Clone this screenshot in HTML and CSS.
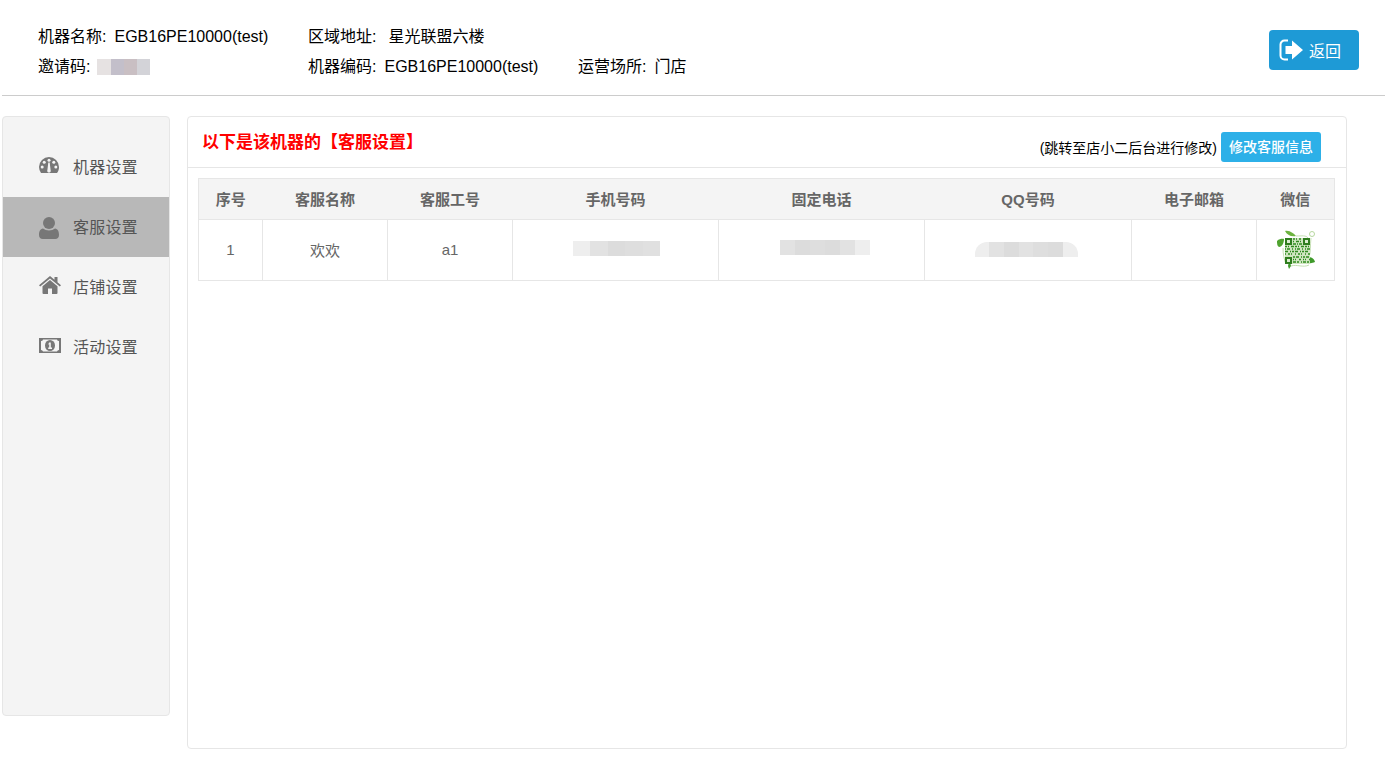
FILE: index.html
```html
<!DOCTYPE html>
<html lang="zh-CN">
<head>
<meta charset="utf-8">
<title>客服设置</title>
<link rel="stylesheet" href="styles.css">
</head>
<body>
<header class="top">
  <div class="info">
    <div class="info-row">
      <div class="field col-a"><span>机器名称:</span><span class="val">EGB16PE10000(test)</span></div>
      <div class="field col-b"><span>区域地址:</span><span class="val val-wide">星光联盟六楼</span></div>
    </div>
    <div class="info-row">
      <div class="field col-a"><span>邀请码:</span>
        <span class="mosaic invite"><i class="m1"></i><i class="m2"></i><i class="m3"></i><i class="m4"></i></span>
      </div>
      <div class="field col-b"><span>机器编码:</span><span class="val">EGB16PE10000(test)</span></div>
      <div class="field"><span>运营场所:</span><span class="val">门店</span></div>
    </div>
  </div>
  <a class="back">
    <svg class="back-icon" viewBox="0 0 24 24" width="24" height="24"><path d="M9 2.5H5.5A4 4 0 0 0 1.5 6.500v11a4 4 0 0 0 4 4H9" fill="none" stroke="#fff" stroke-width="2"/><path d="M13 2.500 24 12 13 21.500V16H6.500V8H13z" fill="#fff"/></svg>
    <span>返回</span>
  </a>
</header>
<main class="layout">
  <nav class="side">
    <a class="side-item">
      <span class="side-icon"><svg viewBox="0 0 20 16" width="20" height="16"><path d="M10 0a10 10 0 0 1 10 10c0 2.300-.7 4.300-2 6H2a10 10 0 0 1-2-6A10 10 0 0 1 10 0z" fill="#777"/><g fill="#f4f4f4"><circle cx="3.200" cy="10" r="1.500"/><circle cx="5.200" cy="5.200" r="1.500"/><circle cx="10" cy="3.200" r="1.500"/><circle cx="14.800" cy="5.200" r="1.500"/><circle cx="16.800" cy="10" r="1.500"/><path d="M9.300 5.500h1.400l.9 7.500a1.800 1.800 0 1 1-3.200 0z"/></g></svg></span>
      <span>机器设置</span>
    </a>
    <a class="side-item active">
      <span class="side-icon icon-low"><svg viewBox="0 0 20 22" width="20" height="22"><circle cx="10" cy="6" r="6" fill="#777"/><path d="M4 11.500c1.600 1.300 3.700 2 6 2s4.400-.7 6-2c2.800.4 4 3 4 6.500 0 2.500-1.500 4-3.800 4H3.800C1.500 22 0 20.500 0 18c0-3.500 1.200-6.100 4-6.500z" fill="#777"/></svg></span>
      <span>客服设置</span>
    </a>
    <a class="side-item">
      <span class="side-icon"><svg viewBox="0 0 22 18" width="22" height="18"><path d="M11 4 3.500 10.300V17a1 1 0 0 0 1 1H9v-5.500h4V18h4.500a1 1 0 0 0 1-1v-6.700z" fill="#777"/><path d="M11 0 0 9.200l1.200 1.400L11 2.500l9.800 8.100L22 9.200l-3.500-2.900V1h-3v2.800z" fill="#777"/></svg></span>
      <span>店铺设置</span>
    </a>
    <a class="side-item">
      <span class="side-icon"><svg viewBox="0 0 22 15" width="22" height="15"><path d="M0 0h22v15H0z" fill="#777"/><path d="M2 3a2 2 0 0 0 2-1.500h14A2 2 0 0 0 20 3v9a2 2 0 0 0-2 1.500H4A2 2 0 0 0 2 12z" fill="#f4f4f4"/><ellipse cx="11" cy="7.500" rx="5" ry="5.500" fill="#777"/><path d="M10 4.500h1.800v5H13V11H9.200V9.500h1V6.200l-1 .5z" fill="#f4f4f4"/></svg></span>
      <span>活动设置</span>
    </a>
  </nav>
  <section class="panel">
    <div class="panel-head">
      <h2 class="panel-title">以下是该机器的【客服设置】</h2>
      <div class="panel-action">
        <span class="hint">(跳转至店小二后台进行修改)</span>
        <a class="edit">修改客服信息</a>
      </div>
    </div>
    <div class="panel-body">
      <table class="grid">
        <thead>
          <tr>
            <th class="c-no">序号</th>
            <th class="c-name">客服名称</th>
            <th class="c-id">客服工号</th>
            <th class="c-mobile">手机号码</th>
            <th class="c-tel">固定电话</th>
            <th class="c-qq">QQ号码</th>
            <th class="c-mail">电子邮箱</th>
            <th>微信</th>
          </tr>
        </thead>
        <tbody>
          <tr>
            <td>1</td>
            <td>欢欢</td>
            <td>a1</td>
            <td><span class="mosaic mob"><i class="n1"></i><i class="n2"></i><i class="n3"></i><i class="n4"></i><i class="n5"></i></span></td>
            <td><span class="mosaic tel"><i class="n2"></i><i class="n3"></i><i class="n4"></i><i class="n3"></i><i class="n2"></i><i class="n1"></i></span></td>
            <td><span class="mosaic qq"><i class="n1"></i><i class="n2"></i><i class="n3"></i><i class="n2"></i><i class="n4"></i><i class="n3"></i><i class="n1"></i></span></td>
            <td></td>
            <td>
              <svg class="qr" viewBox="0 0 40 40" width="40" height="40">
                <path d="M9 1C14 0 18 4 20 6 15 7 11 5 9 1z" fill="#6cb33f"/>
                <path d="M1 11C4 8 8 9 8 9c0 4-2 8-5 8-2-1-2-4-2-6z" fill="#4fa32f"/>
                <path d="M33 27c3 0 6 3 6 5-3 1-5 2-7 0 0-2 0-4 1-5z" fill="#3f9a2b"/>
                <path d="M12 36c0-2 2-4 2-4l1 4-2 3z" fill="#3f9a2b"/>
                <path d="M20 6c6 0 10-1 12 2M15 36c6-2 12 2 18-1M35 8c-1 7 0 14-2 19M7 18c0 6 1 11 3 16" fill="none" stroke="#c5dfb3" stroke-width="1"/>
                <circle cx="36" cy="4" r="2.500" fill="none" stroke="#b7d89f" stroke-width="1"/>
                <rect x="9" y="8" width="25" height="26" fill="#cfe5bf"/>
                <g fill="none" stroke="#2f8a1e" stroke-width="1.500">
                  <path d="M17 9h9" stroke-dasharray="2 1 1 2"/>
                  <path d="M17 11.500h9" stroke-dasharray="1 2 3 1"/>
                  <path d="M17 14h9" stroke-dasharray="3 1 1 1"/>
                  <path d="M9 16.500h25" stroke-dasharray="2 1 1 2 3 1"/>
                  <path d="M9 19h25" stroke-dasharray="1 1 3 2 1 2"/>
                  <path d="M9 21.500h25" stroke-dasharray="3 2 1 1 2 1"/>
                  <path d="M9 24h25" stroke-dasharray="1 2 2 1 1 3"/>
                  <path d="M17 27h17" stroke-dasharray="2 1 3 2 1 1"/>
                  <path d="M17 29.500h17" stroke-dasharray="1 1 1 3 2 2"/>
                  <path d="M17 32h17" stroke-dasharray="3 1 2 2 1 1"/>
                </g>
                <path d="M9 8h7v7H9zM27 8h7v7h-7zM9 27h7v7H9z" fill="#2f7d1e"/>
                <path d="M11 10h3v3h-3zM29 10h3v3h-3zM11 29h3v3h-3z" fill="#dcecd0"/>
              </svg>
            </td>
          </tr>
        </tbody>
      </table>
    </div>
  </section>
</main>
</body>
</html>
```
FILE: styles.css
```css
* { box-sizing: border-box; }
html, body { margin: 0; padding: 0; }
body {
  width: 1385px;
  height: 765px;
  overflow: hidden;
  background: #fff;
  color: #000;
  font-family: "Liberation Sans", "Noto Sans CJK SC", sans-serif;
  font-size: 16px;
}
.top {
  margin-left: 2px;
  height: 96px;
  border-bottom: 1px solid #ccc;
  display: flex;
  justify-content: space-between;
  padding: 22px 26px 0 36px;
}
.info-row { display: flex; height: 30px; align-items: center; }
.field { display: flex; align-items: center; line-height: 30px; white-space: nowrap; }
.col-a { width: 270px; }
.col-b { width: 269px; margin-right: 1px; }
.val { margin-left: 8px; }
.val-wide { margin-left: 12px; }
.mosaic { display: inline-flex; }
.mosaic i { display: block; flex: 1; height: 100%; }
.invite { width: 53px; height: 16px; margin-left: 7px; }
.m1 { background: #e6e2e2; }
.m2 { background: #c3bfca; }
.m3 { background: #c9bfc3; }
.m4 { background: #d3d3d8; }
.back {
  width: 90px;
  height: 40px;
  margin-top: 8px;
  padding-left: 10px;
  background: #1e9ad6;
  border-radius: 4px;
  color: #fff;
  display: flex;
  align-items: center;
  gap: 6px;
}
.back-icon { display: block; }
.layout {
  display: flex;
  align-items: flex-start;
  padding: 20px 0 0 2px;
  gap: 17px;
}
.side {
  width: 168px;
  height: 600px;
  padding-top: 20px;
  background: #f4f4f4;
  border: 1px solid #e6e6e6;
  border-radius: 4px;
}
.side-item {
  display: flex;
  align-items: center;
  height: 60px;
  padding: 0 0 2px 36px;
  color: #555;
  letter-spacing: 0.2px;
}
.side-item.active { background: #b8b8b8; }
.side-icon {
  width: 34px;
  height: 24px;
  margin-top: -2px;
  display: flex;
  align-items: center;
}
.icon-low { margin-top: 4px; }
.side-icon svg { display: block; }
.panel {
  width: 1160px;
  height: 633px;
  background: #fff;
  border: 1px solid #e6e6e6;
  border-radius: 4px;
}
.panel-head {
  height: 51px;
  border-bottom: 1px solid #e6e6e6;
  display: flex;
  justify-content: space-between;
  padding: 0 25px 0 15px;
}
.panel-title {
  margin: 11px 0 0 -1px;
  font-size: 17px;
  line-height: 30px;
  font-weight: bold;
  color: #f00;
}
.panel-action {
  display: flex;
  align-items: center;
  height: 30px;
  margin-top: 15px;
  font-size: 14px;
  gap: 4px;
}
.edit {
  width: 100px;
  height: 30px;
  line-height: 30px;
  text-align: center;
  background: #2db0e8;
  color: #fff;
  font-weight: 500;
  font-size: 14px;
  border-radius: 3px;
}
.panel-body { padding: 10px 11px 0 10px; }
.grid {
  width: 1137px;
  table-layout: fixed;
  border-collapse: collapse;
  font-size: 15px;
  color: #666;
}
.grid th, .grid td {
  padding: 0;
  text-align: center;
  vertical-align: middle;
  border: 1px solid #e6e6e6;
}
.grid th {
  height: 41px;
  padding-bottom: 1px;
  background: #f4f4f4;
  font-weight: bold;
  border-left: 0;
  border-right: 0;
}
.grid th:first-child { border-left: 1px solid #e6e6e6; }
.grid th:last-child { border-right: 1px solid #e6e6e6; }
.grid td { height: 61px; padding-bottom: 1px; }
.c-no { width: 64px; }
.c-name, .c-id { width: 125px; }
.c-mobile, .c-tel { width: 206px; }
.c-qq { width: 207px; }
.c-mail { width: 125px; }
.mob, .tel, .qq { height: 15px; vertical-align: middle; margin-top: -4px; }
.mob { width: 87px; margin-left: 2px; margin-top: -6px; }
.tel { width: 90px; margin-left: 6px; margin-top: -7px; }
.qq { width: 103px; margin-right: 4px; border-radius: 12px 12px 0 0; overflow: hidden; }
.n1 { background: #eeeeee; }
.n2 { background: #e2e2e2; }
.n3 { background: #dcdcdc; }
.n4 { background: #dedede; }
.n5 { background: #e0e0e0; }
.qr { display: block; margin: 0 auto; }
```
